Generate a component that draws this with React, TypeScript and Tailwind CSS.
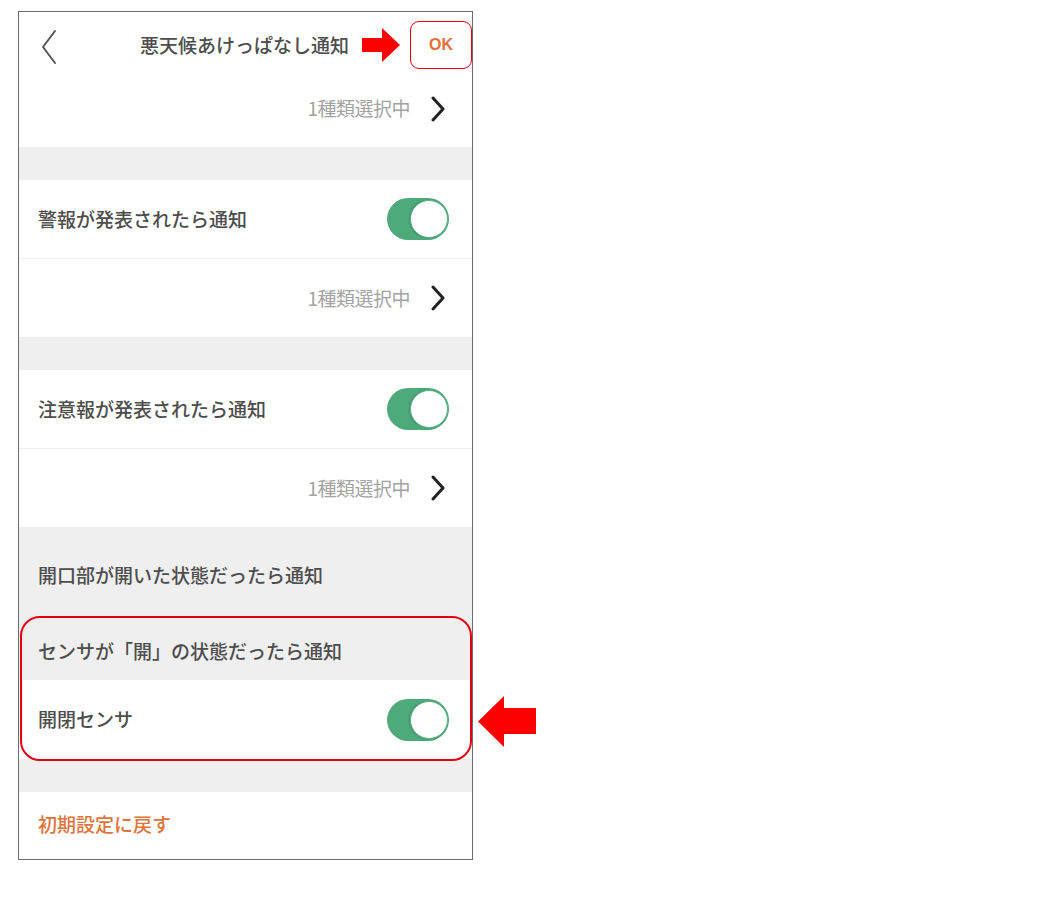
import React from "react";

const font = { fontFamily: '"Noto Sans CJK JP", "Noto Sans", sans-serif' };

function ChevronRight() {
  return (
    <svg width="16" height="26" viewBox="0 0 16 26" className="ml-[20px]">
      <path d="M3 2 L13 13 L3 24" fill="none" stroke="#222" strokeWidth="3" strokeLinecap="round" strokeLinejoin="round" />
    </svg>
  );
}

function Toggle() {
  return (
    <div className="w-[62px] h-[42px] rounded-full bg-[#4ea97b] flex items-center justify-end pr-[1px]">
      <div className="w-[38px] h-[38px] rounded-full bg-white border border-[#5cb488] shadow-[-1px_0_2px_rgba(0,0,0,0.15)]" />
    </div>
  );
}

function SelectRow({ h, pb = 0 }: { h: string; pb?: number }) {
  return (
    <div className={`${h} flex items-center justify-end pr-[26px] bg-white`} style={pb ? { paddingBottom: pb } : undefined}>
      <span className="text-[19px] text-[#a3a3a3] tracking-[-0.5px]">1種類選択中</span>
      <ChevronRight />
    </div>
  );
}

function ToggleRow({ label, h }: { label: string; h: string }) {
  return (
    <div className={`${h} flex items-center justify-between pl-[19px] pr-[23px] bg-white`}>
      <span className="text-[19px] text-[#4d4d4d] font-medium">{label}</span>
      <Toggle />
    </div>
  );
}

export default function App() {
  return (
    <div className="relative w-[1058px] h-[906px] bg-white" style={font}>
      <div className="pt-[11px] pl-[18px]">
        <div className="w-[455px] border border-[#6b6b6b] bg-[#efefef] flex flex-col">
          {/* Header */}
          <div className="h-[68px] bg-white flex items-center relative">
            <svg width="20" height="36" viewBox="0 0 20 36" className="absolute left-[20px] top-[17px]">
              <path d="M16 2 L4 18 L16 34" fill="none" stroke="#555" strokeWidth="2" strokeLinecap="round" strokeLinejoin="round" />
            </svg>
            <div className="absolute left-[121px] top-[19px] text-[19px] text-[#4d4d4d] font-medium">悪天候あけっぱなし通知</div>
            <div className="absolute left-[391px] top-[9px] w-[62px] h-[48px] rounded-[9px] border-[1.5px] border-[#e60012] flex items-center justify-center">
              <span className="text-[16px] font-bold text-[#e27038]" style={{ fontFamily: '"Liberation Sans", Arial, sans-serif' }}>OK</span>
            </div>
          </div>
          <SelectRow h="h-[67px]" pb={10} />
          <div className="h-[33px]" />
          <ToggleRow label="警報が発表されたら通知" h="h-[78px]" />
          <div className="h-px bg-[#f0f0f0]" />
          <SelectRow h="h-[78px]" />
          <div className="h-[33px]" />
          <ToggleRow label="注意報が発表されたら通知" h="h-[78px]" />
          <div className="h-px bg-[#f0f0f0]" />
          <SelectRow h="h-[78px]" />
          {/* gray section */}
          <div className="h-[86px] pt-[10px] flex items-center pl-[19px]">
            <span className="text-[19px] text-[#4d4d4d] font-medium">開口部が開いた状態だったら通知</span>
          </div>
          <div className="h-[67px] pt-[9px] flex items-center pl-[19px]">
            <span className="text-[19px] text-[#4d4d4d] font-medium">センサが「開」の状態だったら通知</span>
          </div>
          <ToggleRow label="開閉センサ" h="h-[79px]" />
          <div className="h-[33px]" />
          <div className="h-[67px] bg-white flex items-center pl-[19px] pb-[2px]">
            <span className="text-[19px] text-[#e0743c] font-medium">初期設定に戻す</span>
          </div>
        </div>
      </div>

      {/* Red annotation box */}
      <div className="absolute left-[20px] top-[616px] w-[452px] h-[145px] rounded-[20px] border-2 border-[#e60012]" />

      {/* Top arrow pointing right */}
      <svg className="absolute left-[362px] top-[28px]" width="40" height="34" viewBox="0 0 40 34">
        <polygon points="0,10 20,10 20,0 38,17 20,34 20,24 0,24" fill="#f00" />
      </svg>

      {/* Bottom arrow pointing left */}
      <svg className="absolute left-[478px] top-[696px]" width="60" height="51" viewBox="0 0 60 51">
        <polygon points="0,25.5 26,0 26,12 58,12 58,38 26,38 26,51" fill="#f00" />
      </svg>
    </div>
  );
}
